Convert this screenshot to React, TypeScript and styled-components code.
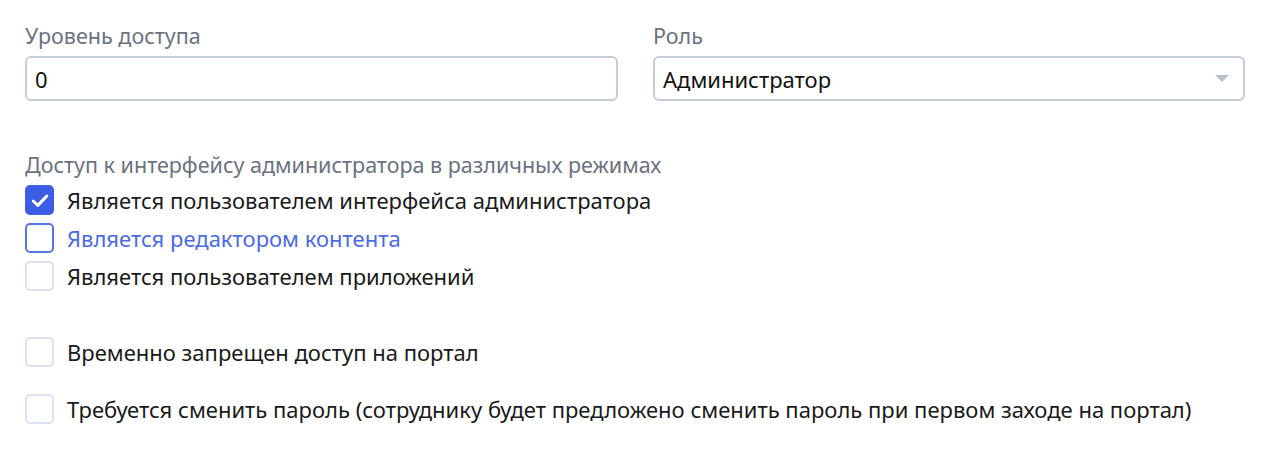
import React, { useState } from "react";
import styled, { createGlobalStyle } from "styled-components";

const GlobalStyle = createGlobalStyle`
  body {
    margin: 0;
    background: #ffffff;
    font-family: "Noto Sans", "Open Sans", sans-serif;
  }
`;

const Page = styled.div`
  padding: 22px 25px 0 25px;
  width: 1220px;
`;

const FieldsRow = styled.div`
  display: grid;
  grid-template-columns: 593px 592px;
  column-gap: 35px;
`;

const Field = styled.div`
  display: flex;
  flex-direction: column;
  gap: 6px;
`;

const Label = styled.label`
  font-size: 21.5px;
  line-height: 28px;
  color: #6b7280;
`;

const Input = styled.input`
  box-sizing: border-box;
  height: 45px;
  border: 2px solid #c7ccd9;
  border-radius: 6px;
  padding: 0 8px;
  font-family: inherit;
  font-size: 22px;
  color: #111;
  outline: none;
`;

const SelectBox = styled.div`
  box-sizing: border-box;
  height: 45px;
  border: 2px solid #c7ccd9;
  border-radius: 6px;
  padding: 0 14px 0 8px;
  display: flex;
  align-items: center;
  justify-content: space-between;
  font-size: 22px;
  color: #111;
`;

const Caret = styled.span`
  width: 0;
  height: 0;
  border-left: 7px solid transparent;
  border-right: 7px solid transparent;
  border-top: 7px solid #b9c0d0;
`;

const Section = styled.div`
  margin-top: 50px;
  display: flex;
  flex-direction: column;
`;

const SectionTitle = styled.div`
  font-size: 21.5px;
  line-height: 28px;
  color: #6b7280;
  margin-bottom: 2px;
`;

const CheckRow = styled.label<{ $gapTop?: number }>`
  display: flex;
  align-items: center;
  gap: 13px;
  height: 38px;
  margin-top: ${(p) => p.$gapTop ?? 0}px;
  cursor: pointer;
`;

const Box = styled.span<{ $checked?: boolean; $active?: boolean }>`
  box-sizing: border-box;
  width: 29px;
  height: 30px;
  border-radius: 5px;
  border: 2px solid
    ${(p) => (p.$checked ? "#3c5de5" : p.$active ? "#5575e6" : "#dbe1f2")};
  background: ${(p) => (p.$checked ? "#3c5de5" : "#fff")};
  display: flex;
  align-items: center;
  justify-content: center;
  flex-shrink: 0;
`;

const CheckText = styled.span<{ $active?: boolean }>`
  font-size: 22px;
  color: ${(p) => (p.$active ? "#4a6ae6" : "#1a1a1a")};
`;

type Item = { text: string; checked?: boolean; active?: boolean; gapTop?: number };

const items: Item[] = [
  { text: "Является пользователем интерфейса администратора", checked: true },
  { text: "Является редактором контента", active: true },
  { text: "Является пользователем приложений" },
  { text: "Временно запрещен доступ на портал", gapTop: 38 },
  {
    text: "Требуется сменить пароль (сотруднику будет предложено сменить пароль при первом заходе на портал)",
    gapTop: 19,
  },
];

const Checkbox: React.FC<{ item: Item }> = ({ item }) => {
  const [checked, setChecked] = useState(!!item.checked);
  return (
    <CheckRow $gapTop={item.gapTop} onClick={() => setChecked(!checked)}>
      <Box $checked={checked} $active={item.active}>
        {checked && (
          <svg width="20" height="20" viewBox="0 0 20 20">
            <path
              d="M3.2 11l4.6 4.4L16.8 6"
              fill="none"
              stroke="#fff"
              strokeWidth="3"
              strokeLinecap="round"
              strokeLinejoin="round"
            />
          </svg>
        )}
      </Box>
      <CheckText $active={item.active}>{item.text}</CheckText>
    </CheckRow>
  );
};

const App: React.FC = () => {
  return (
    <>
      <GlobalStyle />
      <Page>
        <FieldsRow>
          <Field>
            <Label>Уровень доступа</Label>
            <Input defaultValue="0" />
          </Field>
          <Field>
            <Label>Роль</Label>
            <SelectBox>
              <span>Администратор</span>
              <Caret />
            </SelectBox>
          </Field>
        </FieldsRow>
        <Section>
          <SectionTitle>Доступ к интерфейсу администратора в различных режимах</SectionTitle>
          {items.map((item) => (
            <Checkbox key={item.text} item={item} />
          ))}
        </Section>
      </Page>
    </>
  );
};

export default App;
